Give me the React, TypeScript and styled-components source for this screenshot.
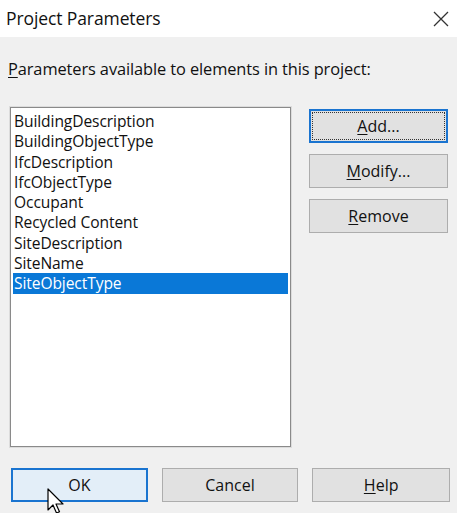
import React from "react";
import styled, { createGlobalStyle } from "styled-components";

const Global = createGlobalStyle`
  html, body { margin: 0; padding: 0; background: #f0f0f0; }
  body { font-family: "Open Sans", "Noto Sans", sans-serif; }
`;

const Dialog = styled.div`
  position: relative;
  width: 457px;
  height: 513px;
  background: #f0f0f0;
  overflow: hidden;
  color: #111;
`;

const TitleBar = styled.div`
  height: 37px;
  background: #ffffff;
  display: flex;
  align-items: center;
  justify-content: space-between;
  padding: 0 7px 2px 6px;
  box-sizing: border-box;
`;

const Title = styled.div`
  font-size: 17.5px;
  color: #111;
  letter-spacing: -0.1px;
`;

const CloseIcon = styled.svg`
  width: 18px;
  height: 18px;
  margin-top: 2px;
`;

const Body = styled.div`
  padding: 21px 7px 0 10px;
  display: flex;
  flex-direction: column;
`;

const Label = styled.div`
  font-size: 16.4px;
  line-height: 22px;
  margin-left: -2px;
  letter-spacing: -0.1px;
`;

const U = styled.span`
  text-decoration: underline;
  text-underline-offset: 2px;
`;

const MainRow = styled.div`
  display: flex;
  margin-top: 27px;
`;

const ListBox = styled.div`
  width: 281px;
  height: 340px;
  box-sizing: border-box;
  background: #ffffff;
  border: 1px solid #8a8a8a;
  box-shadow: 0 0 0 1px #dcdcdc;
  padding: 3px 2px;
  display: flex;
  flex-direction: column;
`;

const Item = styled.div<{ $selected?: boolean }>`
  height: 20.3px;
  line-height: 20.3px;
  font-size: 15.6px;
  padding-left: 1px;
  letter-spacing: -0.1px;
  color: ${(p) => (p.$selected ? "#ffffff" : "#111")};
  background: ${(p) => (p.$selected ? "#0a78d7" : "transparent")};
  white-space: nowrap;
`;

const SideButtons = styled.div`
  display: flex;
  flex-direction: column;
  gap: 11px;
  margin-left: 18px;
  margin-top: 2px;
`;

const Button = styled.div<{ $focus?: boolean; $hover?: boolean; $w?: number }>`
  width: ${(p) => p.$w ?? 139}px;
  height: 34px;
  box-sizing: border-box;
  display: flex;
  align-items: center;
  justify-content: center;
  font-size: 16px;
  color: #111;
  background: ${(p) => (p.$hover ? "#e3eef8" : "#e1e1e1")};
  border: ${(p) => (p.$focus || p.$hover ? "2px solid #1a74d0" : "1px solid #adadad")};
  position: relative;
`;

const FocusRect = styled.div`
  position: absolute;
  inset: 1px;
  border: 1px dotted #333;
  pointer-events: none;
`;

const BottomRow = styled.div`
  display: flex;
  gap: 14px;
  margin-top: 21px;
  margin-left: 1px;
`;

const Cursor = styled.svg`
  position: absolute;
  left: 47px;
  top: 488px;
  width: 20px;
  height: 28px;
`;

const items = [
  "BuildingDescription",
  "BuildingObjectType",
  "IfcDescription",
  "IfcObjectType",
  "Occupant",
  "Recycled Content",
  "SiteDescription",
  "SiteName",
  "SiteObjectType",
];

export default function App() {
  return (
    <>
      <Global />
      <Dialog>
        <TitleBar>
          <Title>Project Parameters</Title>
          <CloseIcon viewBox="0 0 18 18">
            <path d="M2 2 L16 16 M16 2 L2 16" stroke="#333" strokeWidth="1.3" fill="none" />
          </CloseIcon>
        </TitleBar>
        <Body>
          <Label>
            <U>P</U>arameters available to elements in this project:
          </Label>
          <MainRow>
            <ListBox>
              {items.map((it) => (
                <Item key={it} $selected={it === "SiteObjectType"}>
                  {it}
                </Item>
              ))}
            </ListBox>
            <SideButtons>
              <Button $focus>
                <FocusRect />
                <span>
                  <U>A</U>dd...
                </span>
              </Button>
              <Button>
                <span>
                  <U>M</U>odify...
                </span>
              </Button>
              <Button>
                <span>
                  <U>R</U>emove
                </span>
              </Button>
            </SideButtons>
          </MainRow>
          <BottomRow>
            <Button $hover $w={137}>OK</Button>
            <Button $w={137}>Cancel</Button>
            <Button $w={138}>
              <span>
                <U>H</U>elp
              </span>
            </Button>
          </BottomRow>
        </Body>
        <Cursor viewBox="0 0 20 28">
          <path d="M1 1 L1 22 L6 17 L9.5 25 L12.5 23.8 L9 16 L16 16 Z" fill="#fff" stroke="#000" strokeWidth="1.2" strokeLinejoin="round" />
        </Cursor>
      </Dialog>
    </>
  );
}
